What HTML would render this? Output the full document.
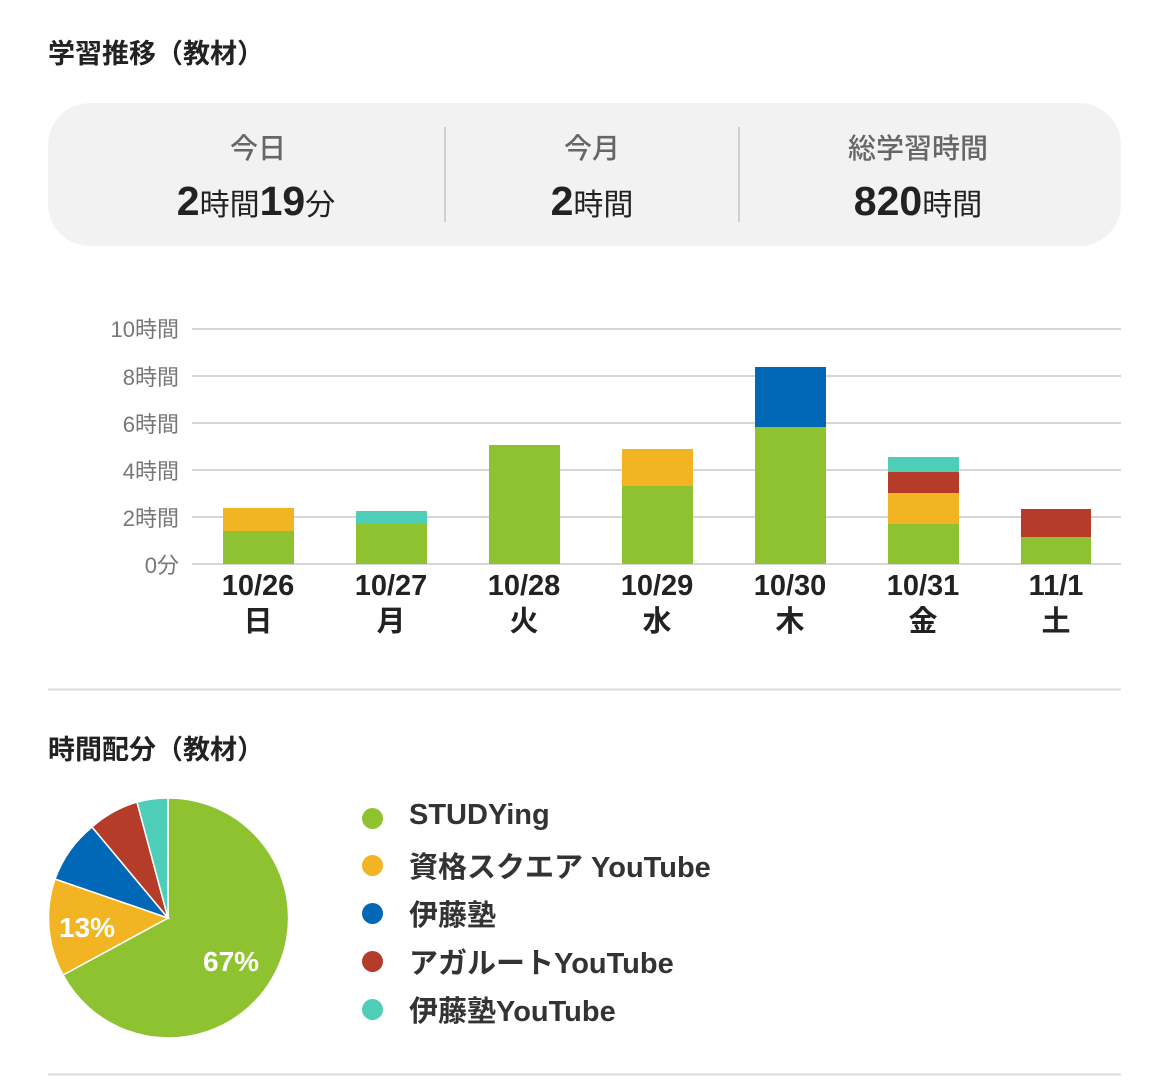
<!DOCTYPE html><html><head><meta charset="utf-8"><style>
body{margin:0;width:1169px;height:1087px;background:#fff;font-family:"Liberation Sans","Noto Sans CJK JP",sans-serif;color:#222;position:relative;overflow:hidden}
.a{position:absolute;white-space:nowrap}
.t{font-weight:bold;font-size:27px;color:#222}
.card{left:48px;top:103px;width:1073px;height:143px;background:#f2f2f2;border-radius:42px}
.lab{font-size:28px;color:#666;text-align:center;font-weight:500}
.val{font-weight:bold;color:#222;text-align:center;font-size:41px}
.val small{font-size:30px;font-weight:normal}
.div{width:2px;background:#d0d0d0;top:127px;height:95px}
.leg{font-size:29px;font-weight:bold;color:#333}
.dot{width:21px;height:21px;border-radius:50%}
</style></head><body>
<div class="a t" style="left:48px;top:32px">学習推移（教材）</div>
<div class="a card"></div>
<div class="a div" style="left:444px"></div><div class="a div" style="left:738px"></div>
<div class="a lab" style="left:160px;width:196px;top:127px">今日</div>
<div class="a lab" style="left:494px;width:196px;top:127px">今月</div>
<div class="a lab" style="left:770px;width:296px;top:127px">総学習時間</div>
<div class="a val" style="left:108px;width:296px;top:178px">2<small>時間</small>19<small>分</small></div>
<div class="a val" style="left:444px;width:296px;top:178px">2<small>時間</small></div>
<div class="a val" style="left:770px;width:296px;top:178px">820<small>時間</small></div>
<svg class="a" style="left:0;top:0" width="1169" height="1087">
<g stroke="#d6d6d6" stroke-width="2">
<line x1="192" x2="1121" y1="329" y2="329"/><line x1="192" x2="1121" y1="376" y2="376"/><line x1="192" x2="1121" y1="423" y2="423"/><line x1="192" x2="1121" y1="470" y2="470"/><line x1="192" x2="1121" y1="517" y2="517"/><line x1="192" x2="1121" y1="564" y2="564"/></g>
<g font-size="22" fill="#777" text-anchor="end" font-family="Liberation Sans,Noto Sans CJK JP,sans-serif">
<text x="179" y="337">10時間</text><text x="179" y="385">8時間</text><text x="179" y="432">6時間</text><text x="179" y="479">4時間</text><text x="179" y="526">2時間</text><text x="179" y="573">0分</text></g>
<rect x="223" y="531" width="71" height="33" fill="#8fc231"/><rect x="223" y="508" width="71" height="23" fill="#f2b423"/>
<rect x="356" y="524" width="71" height="40" fill="#8fc231"/><rect x="356" y="511" width="71" height="13" fill="#4ecdb8"/>
<rect x="489" y="445" width="71" height="119" fill="#8fc231"/>
<rect x="622" y="486" width="71" height="78" fill="#8fc231"/><rect x="622" y="449" width="71" height="37" fill="#f2b423"/>
<rect x="755" y="427" width="71" height="137" fill="#8fc231"/><rect x="755" y="367" width="71" height="60" fill="#0068b7"/>
<rect x="888" y="524" width="71" height="40" fill="#8fc231"/><rect x="888" y="493" width="71" height="31" fill="#f2b423"/><rect x="888" y="472" width="71" height="21" fill="#b63c2a"/><rect x="888" y="457" width="71" height="15" fill="#4ecdb8"/>
<rect x="1021" y="537" width="70" height="27" fill="#8fc231"/><rect x="1021" y="509" width="70" height="28" fill="#b63c2a"/>
<g font-size="29" font-weight="bold" fill="#222" text-anchor="middle" font-family="Liberation Sans,Noto Sans CJK JP,sans-serif">
<text x="258" y="595">10/26</text><text x="391" y="595">10/27</text><text x="524" y="595">10/28</text><text x="657" y="595">10/29</text><text x="790" y="595">10/30</text><text x="923" y="595">10/31</text><text x="1056" y="595">11/1</text>
<text x="258" y="631">日</text><text x="391" y="631">月</text><text x="524" y="631">火</text><text x="657" y="631">水</text><text x="790" y="631">木</text><text x="923" y="631">金</text><text x="1056" y="631">土</text></g>
<line x1="48" x2="1121" y1="689.5" y2="689.5" stroke="#ddd" stroke-width="2"/>
<line x1="48" x2="1121" y1="1074.5" y2="1074.5" stroke="#ddd" stroke-width="2"/>
<g stroke="#fff" stroke-width="1.5">
<path d="M168 918 L168 798 A120 120 0 1 1 63 975 Z" fill="#8fc231"/>
<path d="M168 918 L63 975 A120 120 0 0 1 55 879 Z" fill="#f2b423"/>
<path d="M168 918 L55 879 A120 120 0 0 1 92 827 Z" fill="#0068b7"/>
<path d="M168 918 L92 827 A120 120 0 0 1 137 802 Z" fill="#b63c2a"/>
<path d="M168 918 L137 802 A120 120 0 0 1 168 798 Z" fill="#4ecdb8"/></g>
<g font-size="28" font-weight="bold" fill="#fff" font-family="Liberation Sans,sans-serif">
<text x="59" y="937">13%</text><text x="203" y="971">67%</text></g>
</svg>
<div class="a t" style="left:48px;top:728px">時間配分（教材）</div>
<div class="a dot" style="left:362px;top:808px;background:#8fc231"></div>
<div class="a dot" style="left:362px;top:855px;background:#f2b423"></div>
<div class="a dot" style="left:362px;top:903px;background:#0068b7"></div>
<div class="a dot" style="left:362px;top:951px;background:#b63c2a"></div>
<div class="a dot" style="left:362px;top:999px;background:#4ecdb8"></div>
<div class="a leg" style="left:409px;top:799px">STUDYing</div>
<div class="a leg" style="left:409px;top:844px">資格スクエア YouTube</div>
<div class="a leg" style="left:409px;top:892px">伊藤塾</div>
<div class="a leg" style="left:409px;top:940px">アガルートYouTube</div>
<div class="a leg" style="left:409px;top:988px">伊藤塾YouTube</div>
</body></html>
